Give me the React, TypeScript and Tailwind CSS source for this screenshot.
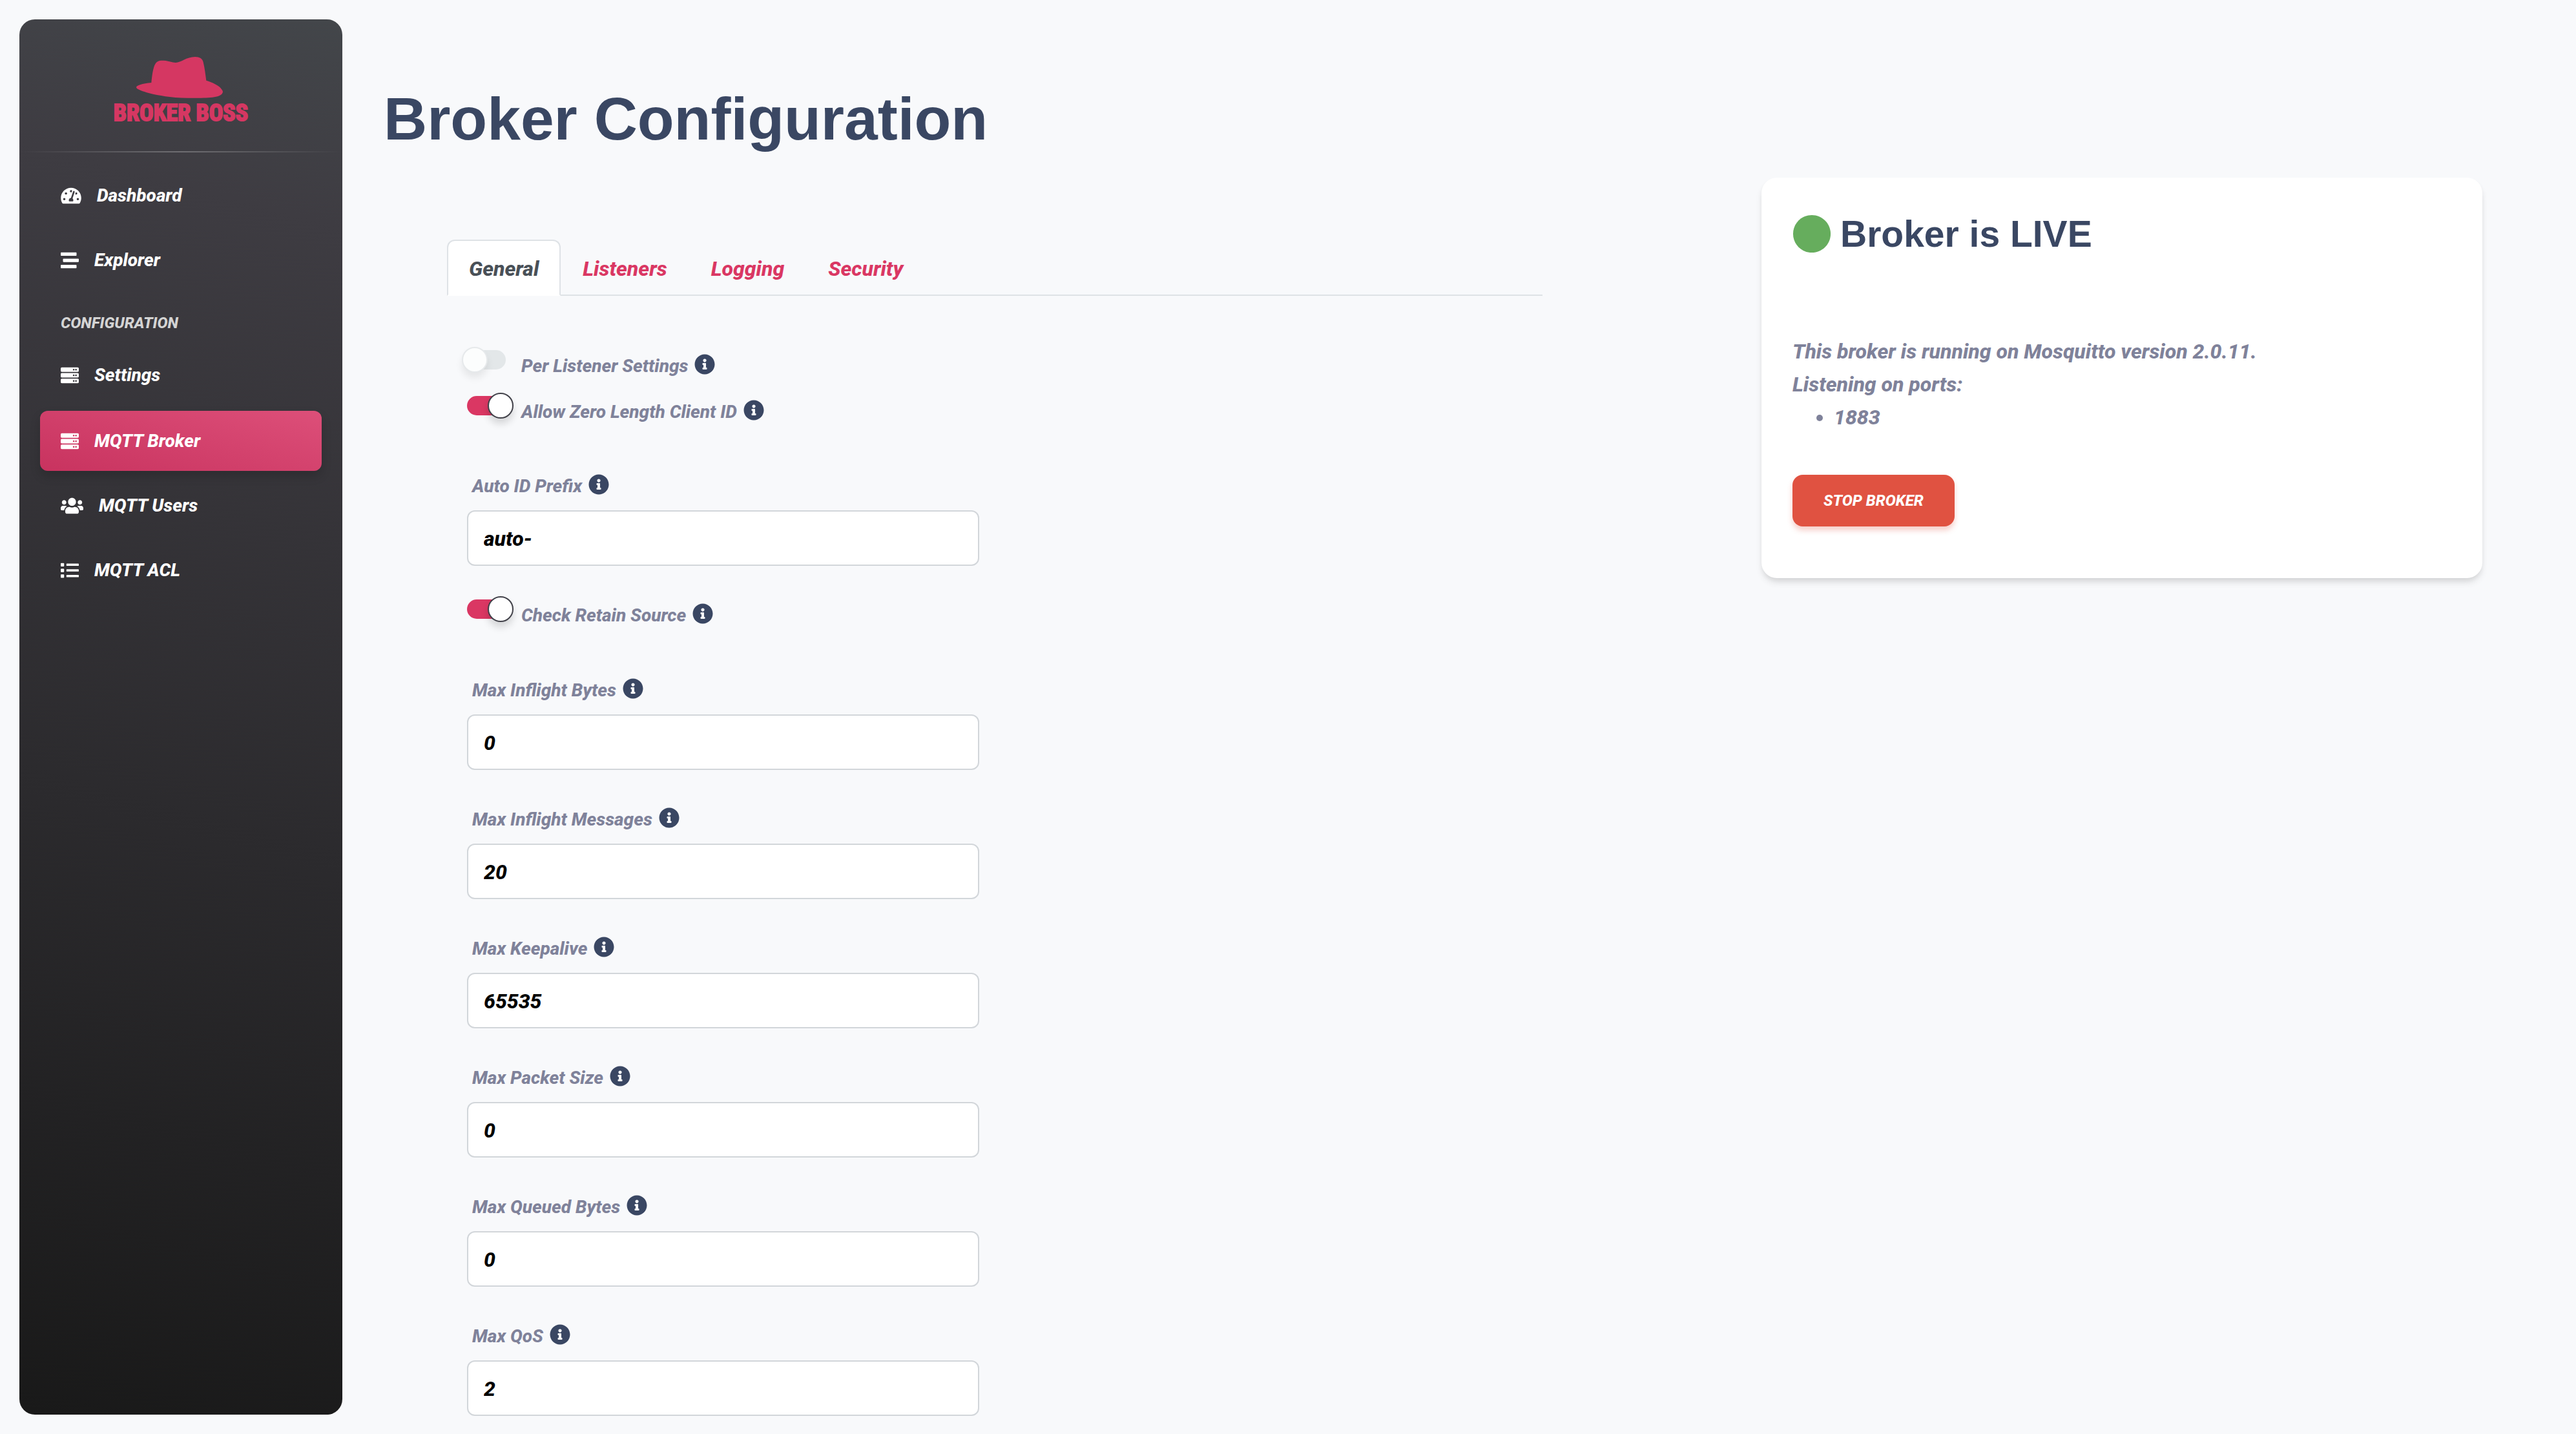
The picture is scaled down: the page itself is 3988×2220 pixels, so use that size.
import React from "react";
import {
  FaCircle,
  FaInfoCircle,
  FaList,
  FaServer,
  FaStream,
  FaTachometerAlt,
  FaUsers,
} from "react-icons/fa";

function Logo() {
  return (
    <a href="#" className="flex h-[204px] flex-col items-center pt-[58px] text-[#d53762]">
      <svg viewBox="0 0 402 192" className="mr-1 h-16 w-[134px]" fill="currentColor" aria-hidden="true">
        <path d="M0 142 C0 132 28 124 70 120 C73 88 77 58 85 39 C92 22 104 17 121 17 C146 17 164 27 183 27 C208 27 232 0 273 0 C294 0 308 8 311 25 C318 52 321 82 325 110 C352 118 378 130 391 144 C398 152 402 158 402 163 C400 176 384 184 362 187 C330 192 280 192 240 191 C170 190 110 182 60 169 C30 161 0 150 0 142 Z" />
      </svg>
      <span className="mt-1 text-4xl leading-[38px] font-bold whitespace-nowrap not-italic font-['Liberation_Sans_Narrow','Roboto_Condensed','Open_Sans_Condensed',sans-serif] [-webkit-text-stroke:2px_currentColor]">
        BROKER BOSS
      </span>
    </a>
  );
}

type NavItemProps = { icon: React.ReactNode; label: string; active?: boolean };

function NavItem({ icon, label, active }: NavItemProps) {
  return (
    <li>
      <a
        href="#"
        aria-current={active ? "page" : undefined}
        className={
          active
            ? "flex h-[93px] items-center gap-6 rounded-xl bg-[linear-gradient(195deg,#dd4f79,#c8335f)] px-8 text-[28px] shadow-[0_8px_16px_rgba(0,0,0,0.16)]"
            : "flex h-[93px] items-center gap-6 rounded-xl px-8 text-[28px]"
        }
      >
        {icon}
        <span>{label}</span>
      </a>
    </li>
  );
}

function Sidebar() {
  return (
    <aside className="sticky top-[30px] m-[30px] mr-0 h-[calc(100vh-60px)] w-[500px] shrink-0 rounded-3xl bg-[linear-gradient(195deg,#43464a,#3e3c42_14%,#191919)] text-white">
      <Logo />
      <hr className="h-0.5 border-0 bg-[linear-gradient(90deg,transparent,rgba(255,255,255,0.25),transparent)]" />
      <nav className="px-8 pt-5">
        <ul className="flex flex-col gap-[7px]">
          <NavItem icon={<FaTachometerAlt className="h-7 w-8" />} label="Dashboard" />
          <NavItem icon={<FaStream className="h-7 w-7" />} label="Explorer" />
        </ul>
        <h6 className="px-8 pt-[33px] pb-4 text-2xl leading-[36px] text-[#d4d4d4]">CONFIGURATION</h6>
        <ul className="mb-[9px]">
          <NavItem icon={<FaServer className="h-7 w-7" />} label="Settings" />
        </ul>
        <ul className="flex flex-col gap-[7px]">
          <NavItem icon={<FaServer className="h-7 w-7" />} label="MQTT Broker" active />
          <NavItem icon={<FaUsers className="h-7 w-[35px]" />} label="MQTT Users" />
          <NavItem icon={<FaList className="h-7 w-7" />} label="MQTT ACL" />
        </ul>
      </nav>
    </aside>
  );
}

function Tabs() {
  const base = "border-2 rounded-t-xl px-8 pt-[18px] pb-[14px] text-[32px] leading-[51px]";
  return (
    <ul className="flex border-b-2 border-[#dee2e6]">
      <li className="-mb-0.5">
        <button
          type="button"
          className={base + " border-[#dee2e6] border-b-white bg-white text-[#495057]"}
        >
          General
        </button>
      </li>
      {["Listeners", "Logging", "Security"].map((t) => (
        <li key={t} className="-mb-0.5">
          <button type="button" className={base + " border-transparent text-[#da3763]"}>
            {t}
          </button>
        </li>
      ))}
    </ul>
  );
}

function LabelText({ id, text }: { id: string; text: string }) {
  return (
    <span className="flex h-9 items-center gap-2.5">
      <label htmlFor={id} className="pt-1.5 text-[28px] leading-8 text-[#7f829a]">
        {text}
      </label>
      <FaInfoCircle className="h-8 w-8 text-[#3a4763]" />
    </span>
  );
}

function SwitchRow({ id, text, on }: { id: string; text: string; on?: boolean }) {
  return (
    <div className="flex h-[71px] items-start gap-6">
      <input
        id={id}
        type="checkbox"
        role="switch"
        defaultChecked={on}
        className="relative mt-[5px] h-[30px] w-[60px] shrink-0 appearance-none rounded-full bg-[#e3e7e9] before:absolute before:-top-[5px] before:-left-2 before:size-10 before:rounded-full before:border-2 before:border-[#e6e9eb] before:bg-[#fcfdfd] before:shadow-[0_8px_12px_rgba(0,0,0,0.08)] checked:bg-[#da3763] checked:before:left-8 checked:before:border-[#42424a] checked:before:bg-white checked:before:shadow-[0_8px_12px_rgba(0,0,0,0.14)]"
      />
      <div className="pt-[9px]">
        <LabelText id={id} text={text} />
      </div>
    </div>
  );
}

function Field({ id, text, value }: { id: string; text: string; value: string }) {
  return (
    <div className="w-full max-w-[793px]">
      <div className="pb-[22px] pl-2">
        <LabelText id={id} text={text} />
      </div>
      <input
        id={id}
        type="text"
        defaultValue={value}
        className="block h-[86px] w-full rounded-xl border-2 border-[#d2d6da] bg-white px-6 pt-0.5 text-[32px] text-black"
      />
    </div>
  );
}

const limits = [
  { id: "max-inflight-bytes", text: "Max Inflight Bytes", value: "0" },
  { id: "max-inflight-messages", text: "Max Inflight Messages", value: "20" },
  { id: "max-keepalive", text: "Max Keepalive", value: "65535" },
  { id: "max-packet-size", text: "Max Packet Size", value: "0" },
  { id: "max-queued-bytes", text: "Max Queued Bytes", value: "0" },
  { id: "max-qos", text: "Max QoS", value: "2" },
];

function StatusCard() {
  return (
    <section className="self-start rounded-3xl bg-white px-12 pt-12 pb-20 text-[32px] leading-[51px] text-[#7f829a] shadow-[0_8px_12px_-2px_rgba(0,0,0,0.12),0_4px_8px_-2px_rgba(0,0,0,0.06)]">
      <h2 className="flex h-[78px] items-center gap-[14px] font-['Liberation_Sans',Arial,sans-serif] text-[57px] leading-[78px] font-bold text-[#3a4763] not-italic">
        <FaCircle className="size-[60px] text-[#66ad5d]" />
        Broker is LIVE
      </h2>
      <p className="mt-[118px]">This broker is running on Mosquitto version 2.0.11.</p>
      <p>Listening on ports:</p>
      <ul className="list-disc pl-16">
        <li>1883</li>
      </ul>
      <button
        type="button"
        className="mt-[63px] h-20 rounded-2xl bg-[#e05241] px-12 text-2xl text-white shadow-[0_6px_8px_rgba(224,82,65,0.28)]"
      >
        STOP BROKER
      </button>
    </section>
  );
}

export default function App() {
  return (
    <div className="flex min-h-screen items-start bg-[#f8f9fb] font-[Roboto,sans-serif] font-extrabold italic">
      <Sidebar />
      <main className="min-w-0 flex-1 pt-32 pr-[145px] pl-16">
        <h1 className="font-['Liberation_Sans',Arial,sans-serif] text-[93px] leading-[112px] font-bold text-[#3a4763] not-italic">
          Broker Configuration
        </h1>
        <div className="mt-[35px] ml-[98px] grid grid-cols-[1696fr_1116fr] gap-[339px]">
          <div className="pt-24">
            <Tabs />
            <form className="mt-[79px] pl-[31px]">
              <SwitchRow id="per-listener" text="Per Listener Settings" />
              <SwitchRow id="zero-length" text="Allow Zero Length Client ID" on />
              <div className="mt-[53px] mb-[47px]">
                <Field id="auto-id" text="Auto ID Prefix" value="auto-" />
              </div>
              <SwitchRow id="retain-source" text="Check Retain Source" on />
              <div className="mt-[54px] flex flex-col gap-14">
                {limits.map((f) => (
                  <Field key={f.id} id={f.id} text={f.text} value={f.value} />
                ))}
              </div>
            </form>
          </div>
          <StatusCard />
        </div>
      </main>
    </div>
  );
}
